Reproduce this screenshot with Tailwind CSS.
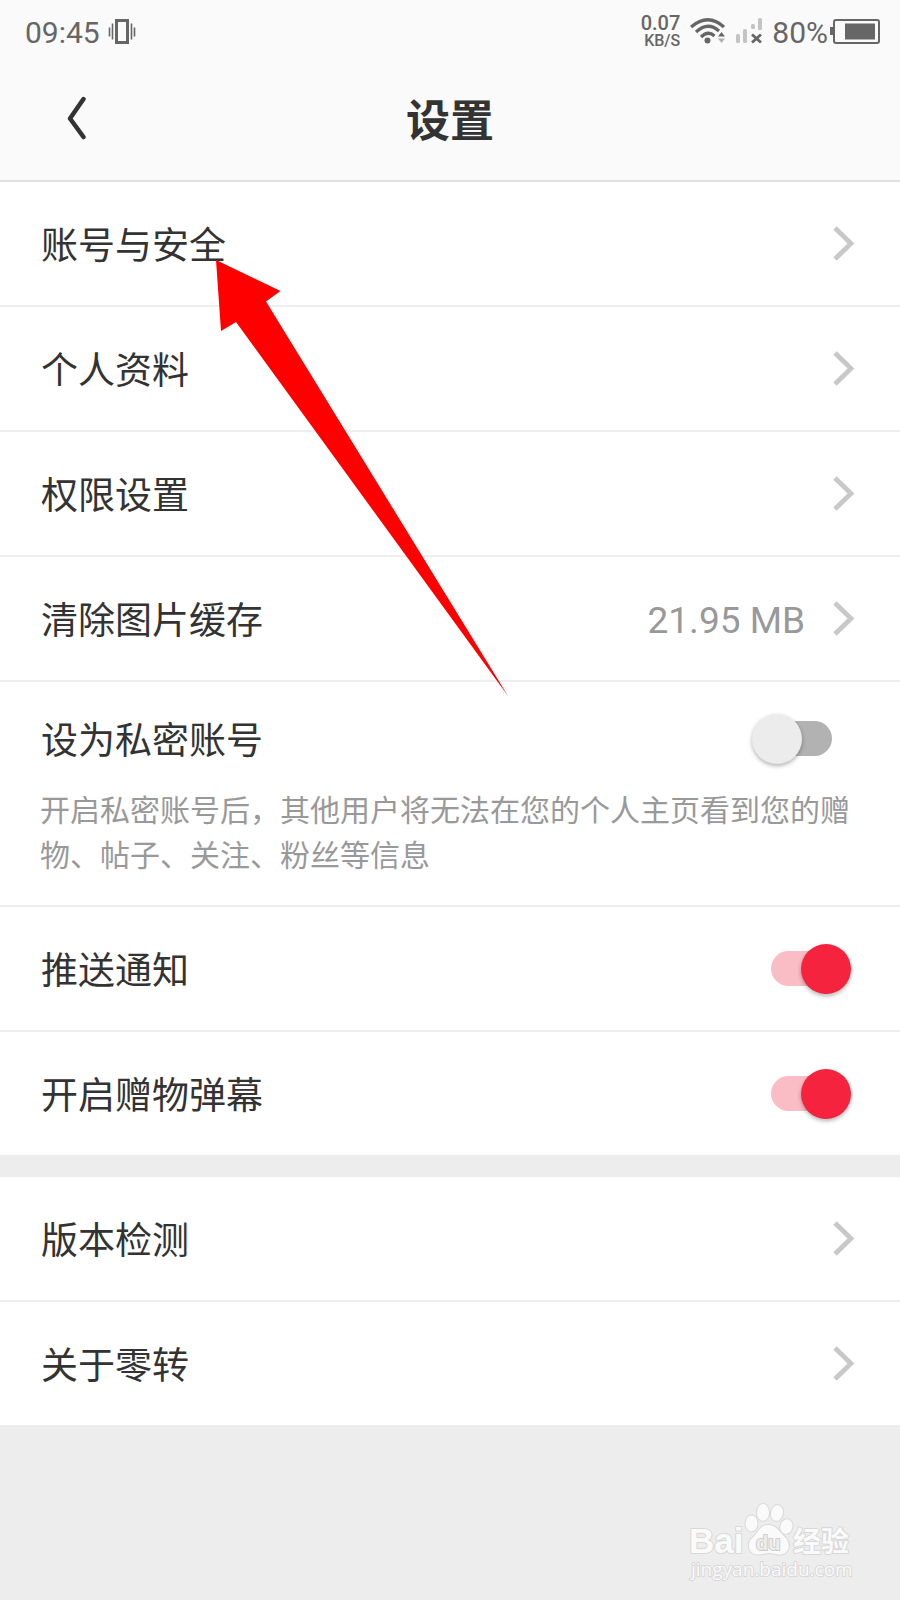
<!DOCTYPE html>
<html lang="zh-CN">
<head>
<meta charset="utf-8">
<meta name="viewport" content="width=device-width, initial-scale=1">
<title>设置</title>
<script src="https://cdn.jsdelivr.net/npm/@tailwindcss/browser@4"></script>
</head>
<body class="relative flex min-h-screen flex-col overflow-x-hidden bg-[#ededed] font-['Roboto','Noto_Sans_CJK_SC',sans-serif] text-[#333333]">

<svg class="hidden" aria-hidden="true">
  <symbol id="chevron" viewBox="0 0 22 36"><path d="M2 2L18 17.500L2 33" fill="none" stroke="#c8c8c8" stroke-width="4.800"/></symbol>
</svg>

<header class="border-b-2 border-[#e0e0e0] bg-[#fafafa]">
  <div class="flex h-16 items-center justify-between px-5 text-[30px] leading-8 text-[#666666]">
    <div class="flex items-center gap-2 pl-[5px]">
      <span class="pt-0.5">09:45</span>
      <svg class="h-[26px] w-7" viewBox="0 0 28 26" fill="none" stroke="#666666" aria-label="振动">
        <rect x="8.500" y="1.500" width="11" height="22" stroke-width="3"/>
        <path d="M1.500 8.500v9M4.500 4.500v16M23.500 4.500v16M26.500 8.500v9" stroke-width="1.600"/>
      </svg>
    </div>
    <div class="flex items-center">
      <div class="mr-2.5 flex flex-col items-end font-medium">
        <span class="text-[20px] leading-[18px]">0.07</span>
        <span class="text-[16px] leading-[18px]">KB/S</span>
      </div>
      <svg class="mr-2 h-7 w-[37px]" viewBox="0 0 37 28" fill="none" stroke="#666666" aria-label="Wi-Fi">
        <path d="M1 9Q18 -5.500 34 9" stroke-width="3.200"/>
        <path d="M6 14Q18 3 29 13" stroke-width="3.200"/>
        <path d="M11 19Q18 12 24.500 18" stroke-width="3.200"/>
        <circle cx="17.500" cy="22.500" r="3" fill="#666666" stroke="none"/>
        <path d="M28 18.500L31.500 14L35 18.500z" fill="#666666" stroke="none"/>
        <path d="M28 20.500h7L31.500 25z" fill="#b0b0b0" stroke="none"/>
      </svg>
      <svg class="mr-2 h-7 w-[29px]" viewBox="0 0 29 28" aria-label="无信号">
        <g fill="#c4c4c4"><rect x="1" y="16" width="4" height="9" rx="1.500"/><rect x="8" y="11" width="4" height="14" rx="1.500"/><rect x="16" y="6" width="4" height="5" rx="1.500"/><rect x="23" y="0" width="4" height="12" rx="1.500"/></g>
        <path d="M17 16.500L26 24.500M26 16.500L17 24.500" stroke="#666666" stroke-width="2.800"/>
      </svg>
      <span class="mr-0.5 pt-0.5">80%</span>
      <svg class="h-[26px] w-[50px]" viewBox="0 0 50 26" aria-label="电池">
        <rect x="4" y="1" width="45" height="23" rx="2" fill="none" stroke="#666666" stroke-width="2"/>
        <rect x="0" y="8" width="3" height="8" fill="#666666"/>
        <rect x="15" y="4.500" width="30" height="16" fill="#666666"/>
      </svg>
    </div>
  </div>
  <div class="grid h-[116px] grid-cols-[1fr_auto_1fr] items-start">
    <button type="button" aria-label="返回" class="ml-14 grid h-27 w-10 place-items-center justify-self-start">
      <svg class="h-11 w-6" viewBox="0 0 24 44"><path d="M19.500 3L6 22.500L19.500 41" fill="none" stroke="#333333" stroke-width="4.500" stroke-linecap="round" stroke-linejoin="round"/></svg>
    </button>
    <h1 class="text-[44px] leading-[116px] font-bold">设置</h1>
  </div>
</header>

<main class="text-[37px] leading-[57px]">
  <section class="divide-y-2 divide-[#eeeeee] bg-white">
    <a href="#account" class="flex h-[125px] items-center justify-between pr-[45px] pl-10"><span class="pt-1.5 pl-px">账号与安全</span><svg class="h-9 w-[22px]"><use href="#chevron"/></svg></a>
    <a href="#profile" class="flex h-[125px] items-center justify-between pr-[45px] pl-10"><span class="pt-1.5 pl-px">个人资料</span><svg class="h-9 w-[22px]"><use href="#chevron"/></svg></a>
    <a href="#permission" class="flex h-[125px] items-center justify-between pr-[45px] pl-10"><span class="pt-1.5 pl-px">权限设置</span><svg class="h-9 w-[22px]"><use href="#chevron"/></svg></a>
    <button type="button" class="flex h-[125px] w-full items-center pr-[45px] pl-10"><span class="flex-1 pt-1.5 pl-px text-left">清除图片缓存</span><span class="mr-7 pt-1 text-[#999999]">21.95 MB</span><svg class="h-9 w-[22px]"><use href="#chevron"/></svg></button>
    <div class="pt-[25px] pb-[27px] pl-10">
      <div class="flex items-center justify-between pr-12">
        <label for="private" class="pt-1.5 pl-px">设为私密账号</label>
        <input id="private" type="checkbox" aria-describedby="private-note" class="grid h-[50px] w-[100px] appearance-none items-center before:h-[35px] before:w-[60px] before:justify-self-center before:rounded-full before:bg-[#b2b2b2] before:[grid-area:1/1] after:size-[50px] after:justify-self-start after:rounded-full after:bg-[#ececec] after:shadow-[0_2px_4px_rgba(0,0,0,0.3)] after:[grid-area:1/1] checked:before:bg-[#fbbdc5] checked:after:justify-self-end checked:after:bg-[#f5233d]">
      </div>
      <p id="private-note" class="mt-[18px] pr-10 text-[30px] leading-[45px] text-[#999999]">开启私密账号后，其他用户将无法在您的个人主页看到您的赠物、帖子、关注、粉丝等信息</p>
    </div>
    <div class="flex h-[125px] items-center justify-between pr-[49px] pl-10">
      <label for="push" class="pt-1.5 pl-px">推送通知</label>
      <input id="push" type="checkbox" checked class="grid h-[50px] w-[100px] appearance-none items-center before:h-[35px] before:w-[60px] before:justify-self-center before:rounded-full before:bg-[#b2b2b2] before:[grid-area:1/1] after:size-[50px] after:justify-self-start after:rounded-full after:bg-[#ececec] after:shadow-[0_2px_4px_rgba(0,0,0,0.3)] after:[grid-area:1/1] checked:before:bg-[#fbbdc5] checked:after:justify-self-end checked:after:bg-[#f5233d]">
    </div>
    <div class="flex h-[123px] items-center justify-between pr-[49px] pl-10">
      <label for="danmu" class="pt-1.5 pl-px">开启赠物弹幕</label>
      <input id="danmu" type="checkbox" checked class="grid h-[50px] w-[100px] appearance-none items-center before:h-[35px] before:w-[60px] before:justify-self-center before:rounded-full before:bg-[#b2b2b2] before:[grid-area:1/1] after:size-[50px] after:justify-self-start after:rounded-full after:bg-[#ececec] after:shadow-[0_2px_4px_rgba(0,0,0,0.3)] after:[grid-area:1/1] checked:before:bg-[#fbbdc5] checked:after:justify-self-end checked:after:bg-[#f5233d]">
    </div>
  </section>
  <section class="mt-[22px] divide-y-2 divide-[#eeeeee] bg-white">
    <a href="#version" class="flex h-[125px] items-center justify-between pr-[45px] pl-10"><span class="pt-1.5 pl-px">版本检测</span><svg class="h-9 w-[22px]"><use href="#chevron"/></svg></a>
    <a href="#about" class="flex h-[123px] items-center justify-between pr-[45px] pl-10"><span class="pt-1.5 pl-px">关于零转</span><svg class="h-9 w-[22px]"><use href="#chevron"/></svg></a>
  </section>
</main>

<footer class="mt-auto flex justify-end pr-10 pb-4">
  <svg class="h-[84px] w-[174px]" viewBox="0 0 174 84" fill="#fafafa" stroke="#d8d8d8" stroke-width="2" paint-order="stroke" stroke-linejoin="round" aria-label="Baidu 经验">
    <text x="3" y="53" font-family="Liberation Sans" font-weight="bold" font-size="35">Bai</text>
    <ellipse cx="65.500" cy="23.500" rx="6" ry="8"/>
    <ellipse cx="77" cy="12.500" rx="6" ry="8.500"/>
    <ellipse cx="91" cy="13" rx="6" ry="8" transform="rotate(12 91 13)"/>
    <ellipse cx="100.500" cy="26.500" rx="6" ry="7.500" transform="rotate(15 100 26)"/>
    <path d="M82 25C74 25 73 32 66 38C60 44 63 54 71 54.500C76 55 79 53 83 53C87 53 90 55 95 54.500C104 53 105 43 99 37C93 32 91 25 82 25z"/>
    <text x="70" y="50" font-family="Liberation Sans" font-size="20" font-weight="bold" fill="#ededed" stroke="#cccccc">du</text>
    <text x="107" y="52" font-family="Noto Sans CJK SC" font-size="28" font-weight="bold">经验</text>
    <text x="5" y="76" font-family="Open Sans" font-size="19">jingyan.baidu.com</text>
  </svg>
</footer>

<svg class="pointer-events-none absolute top-[260px] left-[216px] h-[437px] w-[293px]" viewBox="0 0 293 437" aria-hidden="true">
  <path d="M0 0L64.500 31L50 41.500L292 436L20 62L5 71z" fill="#ff0000"/>
</svg>
</body>
</html>
